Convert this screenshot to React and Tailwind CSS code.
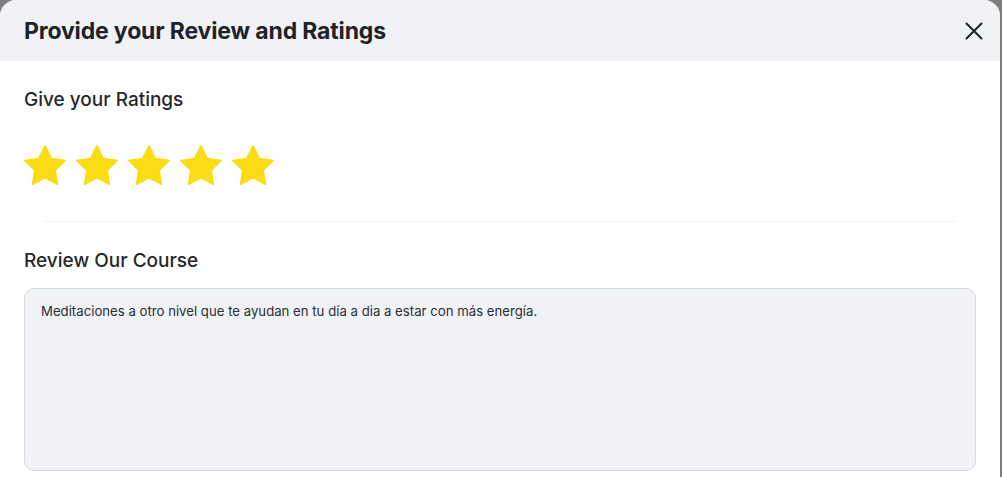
import React, { useState } from 'react';

const font = { fontFamily: 'Inter, "Noto Sans", sans-serif' };

function StarIcon() {
  return (
    <svg width="42" height="40" viewBox="1.6 1.6 20.8 19.8" className="block">
      <path
        d="M12 2l3.09 6.26L22 9.27l-5 4.87 1.18 6.88L12 17.77l-6.18 3.25L7 14.14 2 9.27l6.91-1.01L12 2z"
        fill="#fcdc14"
        stroke="#fcdc14"
        strokeWidth="0.8"
        strokeLinejoin="round"
      />
    </svg>
  );
}

export default function App() {
  const [rating, setRating] = useState(5);
  const [review, setReview] = useState(
    'Meditaciones a otro nivel que te ayudan en tu día a dia a estar con más energía.'
  );

  return (
    <div className="w-[1002px] h-[477px] bg-[#7d7d7d] overflow-hidden" style={font}>
      <div className="w-[1000px] h-[477px] bg-white rounded-t-2xl overflow-hidden">
        {/* Header */}
        <div className="h-[61px] bg-[#f0f2f5] flex items-center justify-between pl-6 pr-[14px]">
          <h1 className="text-[23px] font-bold text-[#1f2329] leading-7 tracking-[-0.15px]">
            Provide your Review and Ratings
          </h1>
          <button className="w-6 h-6 flex items-center justify-center text-[#1f2329]">
            <svg width="18" height="18" viewBox="0 0 18 18" fill="none">
              <path d="M1.5 1.5l15 15M16.5 1.5l-15 15" stroke="currentColor" strokeWidth="2" strokeLinecap="round" />
            </svg>
          </button>
        </div>

        {/* Ratings */}
        <div className="px-6 pt-[27px]">
          <h2 className="text-[19px] font-medium text-[#25282d] leading-6">Give your Ratings</h2>
          <div className="flex gap-[10px] mt-[33px]">
            {[1, 2, 3, 4, 5].map((n) => (
              <button key={n} onClick={() => setRating(n)} className={n <= rating ? '' : 'opacity-30'}>
                <StarIcon />
              </button>
            ))}
          </div>
        </div>

        <div className="mx-[44px] mt-[36px] h-px bg-[#f1f2f4]" />

        {/* Review */}
        <div className="px-6 pt-[27px]">
          <h2 className="text-[19px] font-medium text-[#25282d] leading-6">Review Our Course</h2>
          <textarea
            value={review}
            onChange={(e) => setReview(e.target.value)}
            className="mt-[15px] w-full h-[183px] resize-none rounded-[10px] bg-[#f0f2f5] border border-[#d8dbe0] px-4 py-[13px] text-[13.2px] text-[#2b2e33] outline-none"
            style={font}
          />
        </div>
      </div>
    </div>
  );
}
